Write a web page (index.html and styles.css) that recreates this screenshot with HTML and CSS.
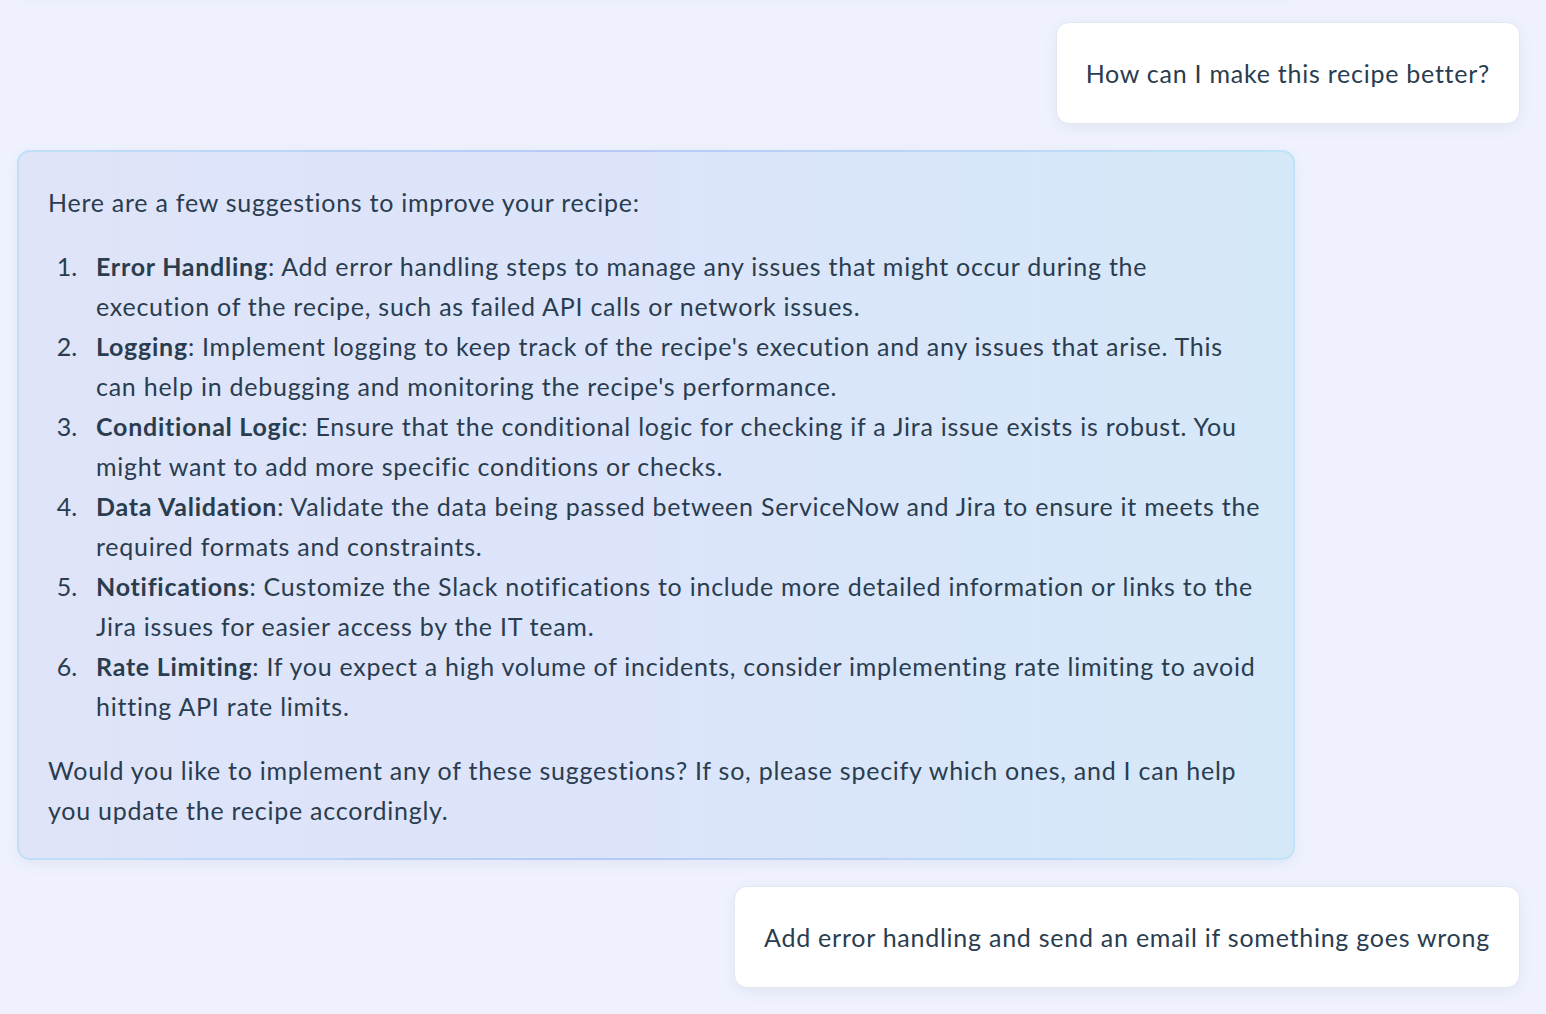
FILE: index.html
```html
<!DOCTYPE html>
<html>
<head>
<meta charset="utf-8">
<link rel="stylesheet" href="styles.css">
</head>
<body>
<div class="chat">
  <div class="msg bot prev"></div>
  <div class="msg user"><p>How can I make this recipe better?</p></div>
  <div class="msg bot">
    <p>Here are a few suggestions to improve your recipe:</p>
    <ol>
      <li><strong>Error Handling</strong>: Add error handling steps to manage any issues that might occur during the execution of the recipe, such as failed API calls or network issues.</li>
      <li><strong>Logging</strong>: Implement logging to keep track of the recipe's execution and any issues that arise. This can help in debugging and monitoring the recipe's performance.</li>
      <li><strong>Conditional Logic</strong>: Ensure that the conditional logic for checking if a Jira issue exists is robust. You might want to add more specific conditions or checks.</li>
      <li><strong>Data Validation</strong>: Validate the data being passed between ServiceNow and Jira to ensure it meets the required formats and constraints.</li>
      <li><strong>Notifications</strong>: Customize the Slack notifications to include more detailed information or links to the Jira issues for easier access by the IT team.</li>
      <li><strong>Rate Limiting</strong>: If you expect a high volume of incidents, consider implementing rate limiting to avoid hitting API rate limits.</li>
    </ol>
    <p>Would you like to implement any of these suggestions? If so, please specify which ones, and I can help you update the recipe accordingly.</p>
  </div>
  <div class="msg user"><p>Add error handling and send an email if something goes wrong</p></div>
</div>
</body>
</html>
```
FILE: styles.css
```css
html, body {
  margin: 0;
  padding: 0;
  background: #eff2fe;
}
body {
  font-family: Lato, "Noto Sans", sans-serif;
  font-size: 25px;
  letter-spacing: 0.75px;
  line-height: 40px;
  color: #2a3d4f;
  overflow: hidden;
  height: 1014px;
}
.chat {
  display: flex;
  flex-direction: column;
  gap: 26px;
  padding: 0 26px 0 17px;
  margin-top: -46px;
}
.msg {
  border-radius: 13px;
  box-sizing: border-box;
}
.msg p { margin: 0; }
.user {
  align-self: flex-end;
  background: #ffffff;
  border: 1px solid #e3e7f0;
  padding: 30px 29px;
  box-shadow: 0 4px 14px rgba(60, 70, 120, 0.08);
}
.bot {
  align-self: flex-start;
  width: 1278px;
  border: 2px solid transparent;
  background:
    linear-gradient(90deg, #dfe4f8 0%, #dce4fb 45%, #d5e8f8 100%) padding-box,
    linear-gradient(90deg, #bfe0f8 0%, #b6c9f6 45%, #bfe3f8 100%) border-box;
  padding: 30px 29px 28px;
  box-shadow: 0 4px 14px rgba(60, 70, 120, 0.08);
}
.prev {
  height: 43px;
  padding: 0;
  margin-bottom: -1px;
  background: #e9edfa;
  border: none;
  box-shadow: 0 3px 8px rgba(60, 70, 120, 0.06);
}
.bot ol {
  margin: 24px 0;
  padding-left: 48px;
}
.bot li::marker {
  content: counter(list-item) ".\2002\2005";
  letter-spacing: 0;
}
.bot strong { font-weight: 700; }
```
